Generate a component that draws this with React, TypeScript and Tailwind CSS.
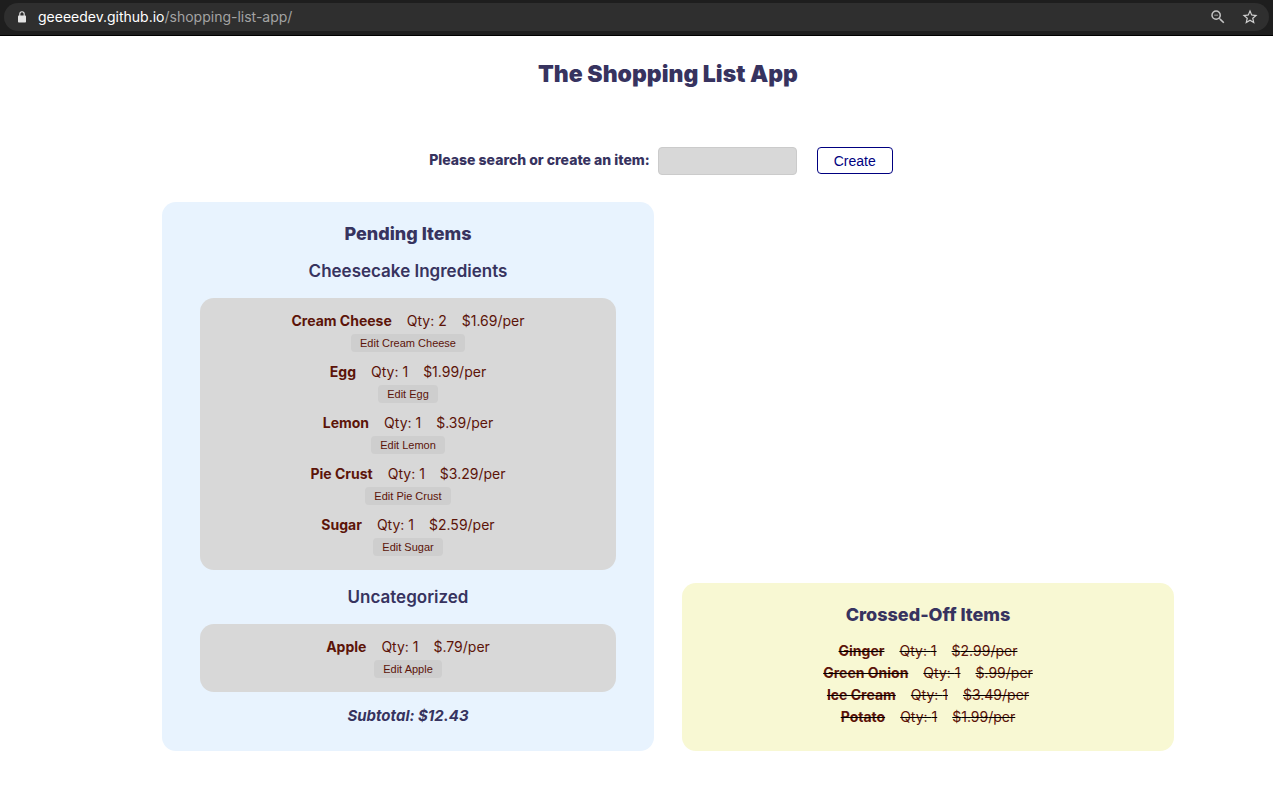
import { MdStarBorder, MdZoomOut } from "react-icons/md";

type Item = { name: string; qty: number; price: string };

const categories: { title: string; items: Item[] }[] = [
  {
    title: "Cheesecake Ingredients",
    items: [
      { name: "Cream Cheese", qty: 2, price: "1.69" },
      { name: "Egg", qty: 1, price: "1.99" },
      { name: "Lemon", qty: 1, price: ".39" },
      { name: "Pie Crust", qty: 1, price: "3.29" },
      { name: "Sugar", qty: 1, price: "2.59" },
    ],
  },
  { title: "Uncategorized", items: [{ name: "Apple", qty: 1, price: ".79" }] },
];

const crossedOff: Item[] = [
  { name: "Ginger", qty: 1, price: "2.99" },
  { name: "Green Onion", qty: 1, price: ".99" },
  { name: "Ice Cream", qty: 1, price: "3.49" },
  { name: "Potato", qty: 1, price: "1.99" },
];

function ItemText({ item, crossed = false }: { item: Item; crossed?: boolean }) {
  const strike = crossed ? "line-through decoration-black decoration-1" : "";
  return (
    <div className="flex justify-center gap-[15px] text-sm leading-[22px] text-[#5c1409]">
      <span className={`font-bold ${strike}`}>{item.name}</span>
      <span className={strike}>Qty: {item.qty}</span>
      <span className={strike}>${item.price}/per</span>
    </div>
  );
}

function LockIcon() {
  return (
    <svg viewBox="0 0 8 12" className="mr-3 h-3 w-2" fill="none" aria-hidden="true">
      <rect x="0" y="4.5" width="8" height="7" rx="0.8" fill="#e4e4e4" />
      <path d="M1.8 5V2.9a2.2 2.2 0 0 1 4.4 0V5" stroke="#e4e4e4" strokeWidth="1.1" />
    </svg>
  );
}

function AddressBar() {
  return (
    <header className="flex h-9 items-center border-b border-black bg-[#1e1e1e] px-1 pb-px">
      <div className="flex h-7 grow items-center rounded-full bg-[#2f2f2f] pr-2.5 pl-3.5">
        <LockIcon />
        <div className="grow text-sm text-[#a3a3a3]">
          <span className="text-white">geeeedev.github.io</span>/shopping-list-app/
        </div>
        <button type="button" aria-label="Zoom" className="mr-3.5 text-[#c4c4c4]">
          <MdZoomOut className="size-[18px]" />
        </button>
        <button type="button" aria-label="Bookmark this page" className="text-[#d0d0d0]">
          <MdStarBorder className="size-[18px]" />
        </button>
      </div>
    </header>
  );
}

export default function App() {
  return (
    <div className="min-h-screen bg-white font-[Inter,sans-serif] text-[#37335f]">
      <AddressBar />
      <main className="pt-5 pr-[99px] pb-11 pl-[162px] text-center">
        <h1 className="text-[23px] leading-9 font-black">The Shopping List App</h1>

        <form className="mt-[55px] mr-[14px] flex items-start justify-center" onSubmit={(e) => e.preventDefault()}>
          <label htmlFor="item" className="mr-2 text-sm leading-[26px] font-extrabold">
            Please search or create an item:
          </label>
          <input
            id="item"
            type="text"
            className="h-7 w-[139px] rounded border border-[#cbcbcb] bg-[#d8d8d8] px-2 text-sm"
          />
          <button
            type="submit"
            className="ml-5 h-[27px] w-[76px] rounded border border-[#000080] bg-white font-['Liberation_Sans',sans-serif] text-sm text-[#000080]"
          >
            Create
          </button>
        </form>

        <div className="mt-[27px] grid grid-cols-2 items-end gap-7">
          <section className="rounded-[14px] bg-[#e8f3fe] px-[38px] pt-[22px] pb-[23px]">
            <h2 className="text-lg leading-5 font-extrabold">Pending Items</h2>
            {categories.map((category) => (
              <div key={category.title}>
                <h3 className="py-[15px] text-[17px] leading-6 font-semibold">{category.title}</h3>
                <ul className="flex flex-col gap-[9px] rounded-[14px] bg-[#d8d8d8] pt-3 pb-3.5">
                  {category.items.map((item) => (
                    <li key={item.name} className="flex flex-col items-center gap-0.5">
                      <ItemText item={item} />
                      <button
                        type="button"
                        className="h-[18px] rounded bg-[#cecece] px-[9px] font-['Liberation_Sans',sans-serif] text-[11px] text-[#5c1409]"
                      >
                        Edit {item.name}
                      </button>
                    </li>
                  ))}
                </ul>
              </div>
            ))}
            <p className="mt-3 text-[15px] leading-6 font-bold italic">Subtotal: $12.43</p>
          </section>

          <section className="rounded-[14px] bg-[#f8f8d3] px-[38px] pt-[22px] pb-[23px]">
            <h2 className="text-lg leading-5 font-extrabold">Crossed-Off Items</h2>
            <ul className="mt-[15px]">
              {crossedOff.map((item) => (
                <li key={item.name}>
                  <ItemText item={item} crossed />
                </li>
              ))}
            </ul>
          </section>
        </div>
      </main>
    </div>
  );
}
